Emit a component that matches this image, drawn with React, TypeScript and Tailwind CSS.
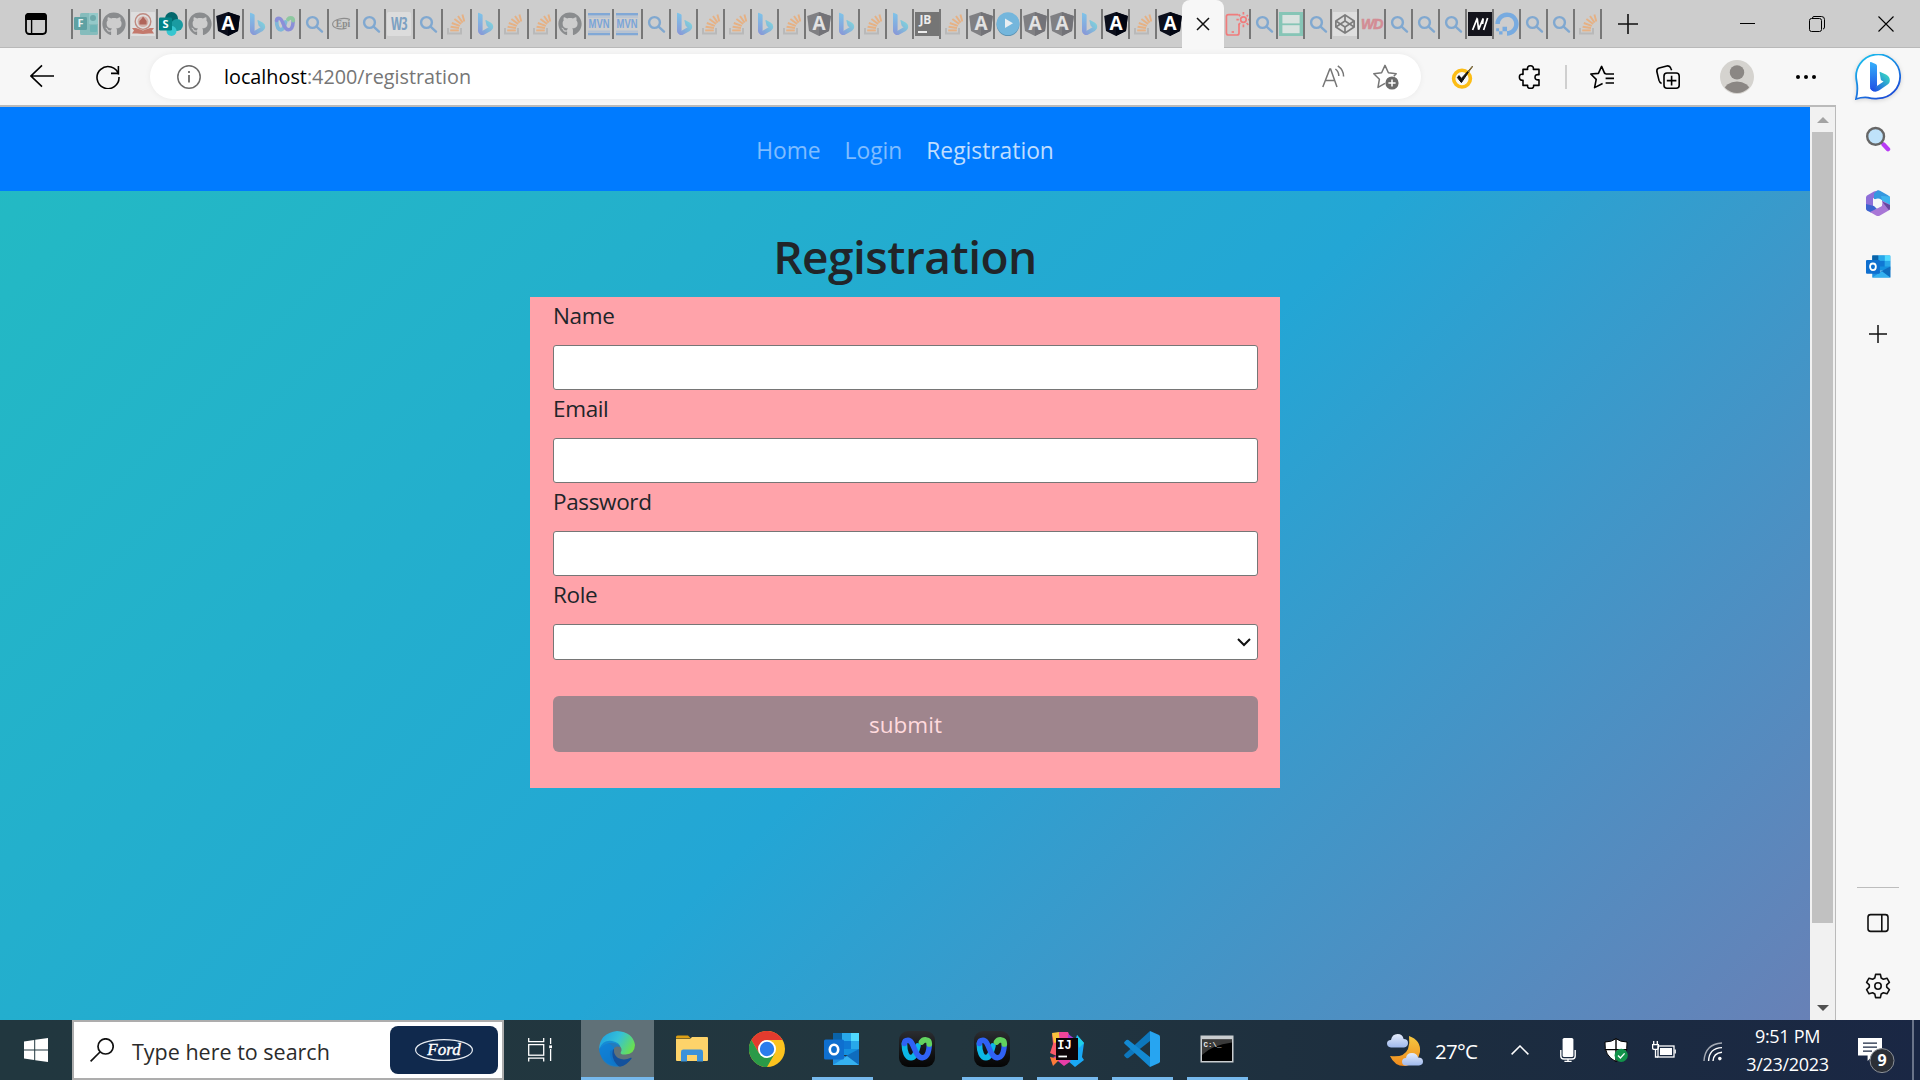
import React from "react";
import { FaGithub, FaCodepen, FaDigitalOcean } from "react-icons/fa";

/* ---------- favicons ---------- */

function Github() {
  return <FaGithub className="size-6 shrink-0 text-[#8a8c8e]" />;
}

function Search() {
  return (
    <svg viewBox="0 0 24 24" className="size-6 shrink-0" fill="none" stroke="#80a8d0" strokeWidth="2.4">
      <circle cx="10.5" cy="10.5" r="5.4" />
      <path d="M14.6 14.6 20 19.6" strokeLinecap="round" />
    </svg>
  );
}

function StackOverflow() {
  return (
    <svg viewBox="0 0 24 24" className="size-6 shrink-0" fill="none">
      <path d="M4 16v5.4h13V16" stroke="#b9b9b9" strokeWidth="2" />
      <g stroke="#e6b184" strokeWidth="1.9">
        <path d="M6.2 18.4h8.6" />
        <path d="M6.6 14.8l8.4 1.2" />
        <path d="M7.8 11l8 2.8" />
        <path d="M10.4 7l6.8 5" />
        <path d="M14 4l4.6 6.6" />
        <path d="M18.4 2.4l1.9 7" />
      </g>
    </svg>
  );
}

function Bing({ id }: { id: string }) {
  return (
    <svg viewBox="0 0 24 24" className="size-6 shrink-0">
      <defs>
        <linearGradient id={id + "s"} x1="0" y1="0" x2="0" y2="1">
          <stop offset="0" stopColor="#7fc4e8" />
          <stop offset="1" stopColor="#8898d8" />
        </linearGradient>
        <linearGradient id={id + "w"} x1="0" y1="1" x2="1" y2="0">
          <stop offset="0.1" stopColor="#8898d8" />
          <stop offset="0.9" stopColor="#7fd3dc" />
        </linearGradient>
      </defs>
      <path d="M5 1.2Q5 .6 5.6 .8L9 2.3Q9.6 2.6 9.6 3.4V18.6L8 22.4Q5 21.8 5 18.6Z" fill={"url(#" + id + "s)"} />
      <path d="M12.4 8.6Q12.2 8 13 8.1L17.6 10.4Q20.4 12 20.2 15.2 20 17.6 17.8 19L11.4 22.6Q9 23.8 7 22.2 6 21.2 5.6 19.6 7.4 20.8 9.6 18.8L15.6 15.2 14.4 14.4Q13.8 14 13.5 13.2Z" fill={"url(#" + id + "w)"} />
    </svg>
  );
}

function Angular({ dark = false }: { dark?: boolean }) {
  return (
    <svg viewBox="0 0 24 24" className="size-6 shrink-0">
      <path d="M12 0 23.8 4 22 19 12 24 2 19 .2 4Z" fill={dark ? "#0c0f1c" : "#808083"} />
      <path d="M12 0 23.8 4 22 19 12 24Z" fill={dark ? "#010512" : "#737378"} />
      <text x="12" y="18" textAnchor="middle" fontFamily="Open Sans, sans-serif" fontWeight="700" fontSize="19" fill={dark ? "#fff" : "#e2e2e2"}>A</text>
    </svg>
  );
}

function Forms() {
  return (
    <svg viewBox="0 0 24 24" className="size-6 shrink-0">
      <rect x="6" y="1" width="18" height="22" rx="1.5" fill="#86bcbc" />
      <rect x="15" y="1" width="9" height="11" fill="#94c9c9" />
      <circle cx="19" cy="6" r="3" fill="#6fa9aa" />
      <rect x="16" y="13" width="7" height="7" rx="1" fill="#6fb5b6" />
      <rect x="0" y="5" width="13" height="13" rx="1.2" fill="#5fa1a3" />
      <text x="6.5" y="15.4" textAnchor="middle" fontFamily="Open Sans, sans-serif" fontWeight="700" fontSize="11" fill="#e6f0f0">F</text>
    </svg>
  );
}

function Seal() {
  return (
    <svg viewBox="0 0 24 24" className="size-6 shrink-0">
      <rect width="24" height="24" fill="#dedede" />
      <circle cx="12" cy="9.6" r="7.8" fill="none" stroke="#bf8a80" strokeWidth="1.4" />
      <circle cx="12" cy="9.6" r="5.4" fill="#d3b0a9" />
      <path d="M8.4 12.600V9l2-2 1.600-2.600 1.800 2.400L15.600 9v3.600z" fill="#b0645a" />
      <path d="M1 16h4l7 2.4 7-2.4h4l-2 2.6 2 2.8h-5L12 22l-6-.6H1l2-2.8z" fill="#c4796c" />
    </svg>
  );
}

function SharePoint() {
  return (
    <svg viewBox="0 0 24 24" className="size-6 shrink-0">
      <circle cx="12.5" cy="6.5" r="6.5" fill="#03676c" />
      <circle cx="18" cy="13" r="6" fill="#1a9ba1" />
      <circle cx="12.5" cy="19" r="5" fill="#37c6d0" />
      <rect x="0" y="5.5" width="13" height="13" rx="1.2" fill="#038387" />
      <text x="6.5" y="16" textAnchor="middle" fontFamily="Open Sans, sans-serif" fontWeight="700" fontSize="11" fill="#fff">S</text>
    </svg>
  );
}

function WebexMark({ faded = false }: { faded?: boolean }) {
  return (
    <svg viewBox="0 0 24 24" className="size-full" fill="none" strokeLinecap="round">
      <path d="M3.600 8.600C3.600 14 5.200 17.800 8 17.800c2.800 0 3.600-4.400 4.600-7.800" stroke={faded ? "#7fb8d8" : "#0cb7e6"} strokeWidth="3.800" />
      <path d="M3.600 8.400C3.600 6.800 4.600 6.200 6 6.200c4.200 0 4.200 11.600 9.600 11.600 3 0 4.400-4 4.600-8.800" stroke={faded ? "#8b8fd8" : "#2f62f5"} strokeWidth="3.600" />
      <path d="M15 7.400C15.800 6.200 17 5.800 18.200 6c1.400.2 2 1.200 2 2.600" stroke={faded ? "#8dc8a0" : "#62d35f"} strokeWidth="3.800" />
    </svg>
  );
}

function Epi() {
  return (
    <svg viewBox="0 0 24 24" className="size-6 shrink-0">
      <path d="M20 7.500C14 5 3 7 2.600 12c0 5 10 6 14 4" fill="none" stroke="#8c8c8c" strokeWidth="1.100" />
      <text x="13" y="15.200" textAnchor="middle" fontFamily="Liberation Serif, serif" fontWeight="700" fontSize="9.500" fill="#8a8a8a">Epi</text>
    </svg>
  );
}

function W3() {
  return (
    <svg viewBox="0 0 24 24" className="size-6 shrink-0">
      <rect width="24" height="24" rx="1.500" fill="#dcdcdc" />
      <text x="12" y="18" textAnchor="middle" fontFamily="Open Sans Condensed, Open Sans, sans-serif" fontSize="14" fontWeight="600" letterSpacing="-0.800" fill="#7da1c2" transform="translate(0 -5.400) scale(1 1.300)">W3</text>
    </svg>
  );
}

function Mvn() {
  return (
    <svg viewBox="0 0 24 24" className="size-6 shrink-0">
      <path d="M1 2.200h22M1 22h22" stroke="#81a8d6" strokeWidth="2.400" />
      <path d="M1 5h22M1 19.200h22" stroke="#a8bcd6" strokeWidth="1" />
      <text x="12" y="12.600" textAnchor="middle" fontFamily="Liberation Sans, sans-serif" fontWeight="700" fontSize="9.400" fill="#7ba4d8" transform="scale(1 1.300)">MVN</text>
    </svg>
  );
}

function JetBrains() {
  return (
    <svg viewBox="0 0 24 24" className="size-6 shrink-0">
      <rect width="24" height="24" fill="#757575" />
      <text x="10.400" y="12" textAnchor="middle" fontFamily="Open Sans, sans-serif" fontWeight="700" fontSize="12" fill="#ececec">JB</text>
      <rect x="3" y="19" width="9" height="2" fill="#ececec" />
    </svg>
  );
}

function Play() {
  return (
    <svg viewBox="0 0 24 24" className="size-6 shrink-0">
      <circle cx="12" cy="12.600" r="11.400" fill="#5c93b3" />
      <circle cx="12" cy="11.600" r="11.400" fill="#74b6dc" />
      <path d="M9 6.500v9.600l8-4.800z" fill="#e8eef2" />
    </svg>
  );
}

function PhoneSun() {
  return (
    <svg viewBox="0 0 24 24" className="size-6 shrink-0" fill="none" stroke="#f07c7c" strokeWidth="1.700">
      <path d="M13 2.600H3.400Q1.400 2.600 1.400 4.600V21q0 2 2 2H12q2 0 2-2v-9" />
      <circle cx="18.400" cy="7.600" r="2.800" />
      <path d="M18.400 0v2.400M18.400 12.600v2.600M11.400 7.600h2.400M23 7.600h1.400M13.400 2.400l1.800 1.800M23 3l-1.400 1.400M13.600 12.600l1.600-1.600M21.600 11l1.800 1.800" />
      <path d="M6.600 20h2.400" />
    </svg>
  );
}

function GreenPanel() {
  return (
    <svg viewBox="0 0 24 24" className="size-6 shrink-0">
      <rect width="24" height="24" fill="#86c5b6" />
      <rect x="3.400" y="3" width="17.200" height="8.400" fill="#d9e2df" />
      <rect x="3.400" y="13.200" width="17.200" height="8" fill="#d9e2df" />
    </svg>
  );
}

function Codepen() {
  return (
    <div className="flex size-6 shrink-0 items-center justify-center bg-[#dedede]">
      <FaCodepen className="size-5 text-[#7c7c7c]" />
    </div>
  );
}

function Wd() {
  return (
    <svg viewBox="0 0 24 24" className="size-6 shrink-0">
      <text x="11.800" y="17.400" textAnchor="middle" fontFamily="Liberation Sans, sans-serif" fontStyle="italic" fontWeight="700" fontSize="14" letterSpacing="-0.800" stroke="#d38c94" strokeWidth=".6" fill="#d38c94">WD</text>
    </svg>
  );
}

function Medium() {
  return (
    <svg viewBox="0 0 24 24" className="size-6 shrink-0">
      <rect width="24" height="24" fill="#14141c" />
      <path d="M4.600 18 9.200 6.400 10.600 17.600 15.200 6.400 M15.200 6.400 14.600 12M19.600 6 15.600 18M9.200 6.400 8.400 6.400" stroke="#fff" strokeWidth="1.700" fill="none" strokeLinejoin="bevel" />
    </svg>
  );
}

function Digital() {
  return <FaDigitalOcean className="size-6 shrink-0 text-[#78abe0]" />;
}

type Kind =
  | "forms" | "github" | "seal" | "sharepoint" | "angular" | "angularGray" | "bing" | "webex" | "search"
  | "epi" | "w3" | "so" | "mvn" | "jb" | "play" | "phone" | "green" | "codepen" | "wd" | "m" | "do";

function Favicon({ kind, id }: { kind: Kind; id: string }) {
  switch (kind) {
    case "forms": return <Forms />;
    case "github": return <Github />;
    case "seal": return <Seal />;
    case "sharepoint": return <SharePoint />;
    case "angular": return <Angular dark />;
    case "angularGray": return <Angular />;
    case "bing": return <Bing id={id} />;
    case "webex": return <div className="size-6"><WebexMark faded /></div>;
    case "search": return <Search />;
    case "epi": return <Epi />;
    case "w3": return <W3 />;
    case "so": return <StackOverflow />;
    case "mvn": return <Mvn />;
    case "jb": return <JetBrains />;
    case "play": return <Play />;
    case "phone": return <PhoneSun />;
    case "green": return <GreenPanel />;
    case "codepen": return <Codepen />;
    case "wd": return <Wd />;
    case "m": return <Medium />;
    case "do": return <Digital />;
  }
}

const wideTabs: Kind[] = [
  "forms", "github", "seal", "sharepoint", "github", "angular", "bing", "webex", "search", "epi", "search",
  "w3", "search", "so", "bing", "so", "so", "github", "mvn", "mvn", "search",
];
const midTabs: Kind[] = [
  "bing", "so", "so", "bing", "so", "angularGray", "bing", "so", "bing", "jb", "so", "angularGray", "play",
  "angularGray", "angularGray", "bing", "angular", "so", "angular",
];
const lastTabs: Kind[] = [
  "phone", "search", "green", "search", "codepen", "wd", "search", "search", "search", "m", "do", "search",
  "search", "so",
];

function TabStrip() {
  return (
    <div className="flex h-12 items-center bg-[#cdcdcd] shadow-[inset_0_-1px_0_#b9b9b9]">
      <div className="flex w-[70.5px] justify-center pl-[1.5px]">
        <svg viewBox="0 0 24 24" className="size-6" fill="none" stroke="#000" strokeWidth="1.800">
          <rect x="2" y="2" width="20" height="20" rx="3.200" />
          <path d="M2 4.500Q2 2 4.500 2h15Q22 2 22 4.500V7H2z" fill="#000" />
          <path d="M7.600 7v15" strokeWidth="1.400" />
        </svg>
      </div>
      <div className="flex h-[30px]">
        {wideTabs.map((k, i) => (
          <div key={i} className="flex w-[28.5px] items-center justify-center border-l-2 border-[#777]">
            <Favicon kind={k} id={"a" + i} />
          </div>
        ))}
        {midTabs.map((k, i) => (
          <div key={i} className="flex w-[27px] items-center justify-center border-l-2 border-[#777]">
            <Favicon kind={k} id={"b" + i} />
          </div>
        ))}
      </div>
      <div className="z-10 flex h-12 w-[42px] items-center justify-center rounded-t-lg bg-[#f7f7f7]">
        <svg viewBox="0 0 14 14" className="size-[14px]" stroke="#111" strokeWidth="1.500">
          <path d="M1 1l12 12M13 1 1 13" />
        </svg>
      </div>
      <div className="flex h-[30px]">
        {lastTabs.map((k, i) => (
          <div key={i} className="flex w-[27px] items-center justify-center border-r-2 border-[#777]">
            <Favicon kind={k} id={"c" + i} />
          </div>
        ))}
      </div>
      <div className="flex w-[51px] justify-center">
        <svg viewBox="0 0 22 22" className="size-[22px]" stroke="#111" strokeWidth="1.600">
          <path d="M11 1v20M1 11h20" />
        </svg>
      </div>
      <div className="ml-auto flex">
        <div className="flex w-[69px] justify-center">
          <svg viewBox="0 0 16 16" className="size-4" stroke="#000"><path d="M0 7.500h15" /></svg>
        </div>
        <div className="flex w-[69px] justify-center">
          <svg viewBox="0 0 16 16" className="size-4" fill="none" stroke="#000">
            <rect x=".5" y="2.500" width="12" height="13" rx="2" />
            <path d="M3.500 2Q3.500.5 5 .5h7.500q3 0 3 3V11q0 2-1.500 2" />
          </svg>
        </div>
        <div className="flex w-[69px] justify-center">
          <svg viewBox="0 0 16 16" className="size-4" stroke="#000" strokeWidth="1.100"><path d="M.5.5l15 15M15.500.5l-15 15" /></svg>
        </div>
      </div>
    </div>
  );
}

function BingChat() {
  return (
    <svg viewBox="0 0 46 46" className="mr-0.5 size-[46px] drop-shadow-sm">
      <defs>
        <linearGradient id="bubble" x1="0" y1="0" x2="0.6" y2="1">
          <stop offset="0" stopColor="#19c8f0" />
          <stop offset="1" stopColor="#1b50d8" />
        </linearGradient>
        <linearGradient id="bStem" x1="0" y1="0" x2="0" y2="1">
          <stop offset="0" stopColor="#36b0fb" />
          <stop offset="1" stopColor="#1f4fe4" />
        </linearGradient>
        <linearGradient id="bTail" x1="0" y1="1" x2="1" y2="0">
          <stop offset="0.1" stopColor="#1d4fe6" />
          <stop offset="0.9" stopColor="#37d8c4" />
        </linearGradient>
      </defs>
      <path d="M1 45Q3.400 36 1.600 27A22 22 0 1 1 23 44.400Q18 45 13 43.600 7 43 1 45Z" fill="#fff" stroke="url(#bubble)" strokeWidth="1.800" />
      <path d="M15 8.600q0-1 1-.6l4.600 2q1.400.6 1.400 2V32l-3 5.400q-4-.8-4-4.600z" fill="url(#bStem)" />
      <path d="M24.600 18.400q-.2-.8.8-.5l5.600 2.500q4 2 3.800 6 0 3-3.200 4.800L24 36.600q-3.600 2-6.400.2-1.800-1.200-2.400-3 3 1 6-1.400l7.400-4.800-1.600-.8q-1-.6-1.200-1.400z" fill="url(#bTail)" />
    </svg>
  );
}

function Toolbar() {
  return (
    <div className="flex h-[57px] items-center bg-[#f7f7f7]">
      <div className="flex w-[84px] justify-center pb-0.5">
        <svg viewBox="0 0 24 24" className="size-6" fill="none" stroke="#000" strokeWidth="1.600">
          <path d="M24 12H1M12 1.400 1 12l11 10.600" />
        </svg>
      </div>
      <div className="flex w-12 justify-center">
        <svg viewBox="0 0 24 24" className="size-6" fill="none" stroke="#000" strokeWidth="1.600">
          <path d="M22.600 9.600A11 11 0 1 0 23 12M22.400 1v7.400H15" />
        </svg>
      </div>
      <div className="ml-[18px] flex h-[45px] w-[1271px] items-center rounded-full bg-white pr-[22px] pl-[27px] shadow-[0_0_6px_rgba(0,0,0,0.06)]">
        <svg viewBox="0 0 24 24" className="size-6" fill="none" stroke="#6b6b6b" strokeWidth="1.500">
          <circle cx="12" cy="12" r="11.200" />
          <path d="M12 10v7.600M12 6v2" strokeWidth="1.800" />
        </svg>
        <div className="ml-[23px] flex-1 text-[19.800px] leading-none text-[#767676]">
          <span className="text-black">localhost</span>:4200/registration
        </div>
        <svg viewBox="0 0 24 24" className="size-6" fill="none" stroke="#767676" strokeWidth="1.500">
          <path d="M.8 22 7.800 4h.8L15 22M3.400 15.600h9.600" />
          <path d="M13.400 4q3.400 2.400 3.400 7M15.800 .8q5.800 4 5.800 10.600" />
        </svg>
        <svg viewBox="0 0 26 26" className="ml-[27px] size-[26px]" fill="none" stroke="#767676" strokeWidth="1.500">
          <path d="M12 19.400 5 23.400l1.400-8.200L.8 9.800l7.800-1L12 1.400l3.400 7.400 7.800 1-2.400 2.400" strokeLinejoin="round" />
          <circle cx="19" cy="19" r="6.600" fill="#6b6b6b" stroke="none" />
          <path d="M19 15.400v7.200M15.400 19h7.200" stroke="#fff" />
        </svg>
      </div>
      <div className="flex w-[84px] justify-center">
        <svg viewBox="0 0 24 24" className="size-6" fill="none">
          <circle cx="11" cy="13.600" r="8.400" stroke="#fcbd16" strokeWidth="3.600" />
          <path d="M6.400 12.600l4 5L21.400 1.400 10.400 13.400 8 10.600z" fill="#111" stroke="#111" strokeWidth="1" />
          <path d="M17 7 21.600 1.400" stroke="#907a40" strokeWidth="1.200" />
        </svg>
      </div>
      <div className="flex w-[49px] justify-center">
        <svg viewBox="0 0 24 24" className="size-6" fill="none" stroke="#000" strokeWidth="1.600" strokeLinejoin="round">
          <path d="M5 4.400h4.600Q9 .8 12.400.8T15.400 4.400H21v5.400q-4-.8-4 2.400t4 2.600v5.600h-5.400q.4 3-3 3t-3-3H5v-5.200q-3.600.4-3.600-3.200T5 9.400z" />
        </svg>
      </div>
      <div className="ml-[11px] h-6 w-0.5 bg-[#cfcfcf]" />
      <div className="flex w-[70px] justify-center">
        <svg viewBox="0 0 24 24" className="size-6" fill="none" stroke="#000" strokeWidth="1.600" strokeLinejoin="round">
          <path d="M16 8.600 14.600 8.400 11.600 1.400 8.400 8.400.8 9l5.400 5.400L4.600 22.600l6.600-3.400 1.400-.6M15.600 9H24M15.600 13.400H24M15.600 18H24" />
        </svg>
      </div>
      <div className="flex w-[62px] justify-center">
        <svg viewBox="0 0 24 24" className="size-6" fill="none" stroke="#000" strokeWidth="1.600">
          <path d="M5.600 18.400Q3.600 17.600 3 15.400L.9 6.800Q.4 3.800 3.200 3L10.800 1q3-.6 4 2.200l.8 2" />
          <rect x="8" y="8" width="15.200" height="15.200" rx="3" />
          <path d="M15.600 10.800v9.600M10.800 15.600h9.600" />
        </svg>
      </div>
      <div className="flex w-[76px] justify-center">
        <svg viewBox="0 0 34 34" className="size-[34px]">
          <defs><clipPath id="av"><circle cx="17" cy="17" r="16" /></clipPath></defs>
          <circle cx="17" cy="17" r="17" fill="#d5d3cf" />
          <circle cx="17" cy="12.400" r="7.200" fill="#8b8784" />
          <ellipse cx="17" cy="31" rx="13" ry="9.400" fill="#8b8784" clipPath="url(#av)" />
        </svg>
      </div>
      <div className="flex w-[62px] justify-center gap-1">
        <span className="size-1 rounded-full bg-black" />
        <span className="size-1 rounded-full bg-black" />
        <span className="size-1 rounded-full bg-black" />
      </div>
      <div className="flex w-[83px] justify-center"><BingChat /></div>
    </div>
  );
}

/* ---------- page ---------- */

function Label({ text }: { text: string }) {
  return <span className="block h-9 text-[22.500px] leading-[38px] tracking-[-0.350px] text-[#212529]">{text}</span>;
}

function Field({ label }: { label: string }) {
  return (
    <label className="block">
      <Label text={label} />
      <input className="mt-3 block h-[45px] w-full rounded-[3px] border border-[#767676] bg-white outline-none" />
    </label>
  );
}

function Page() {
  return (
    <div className="flex w-[1810px] flex-col overflow-hidden">
      <nav className="flex h-[84px] items-center justify-center bg-[#007bff] pt-[5px] text-[22.800px] text-white/50">
        <a className="px-3">Home</a>
        <a className="px-3">Login</a>
        <a className="px-3 text-white/75">Registration</a>
      </nav>
      <main className="flex flex-1 flex-col items-center bg-[linear-gradient(135deg,#23d5ab_-75%,#23a6d5_53%,#e73c7e_187%)]">
        <h1 className="mt-9 mb-3 h-[58px] text-[46px] leading-[59px] font-semibold tracking-[-0.5px] text-[#212529]">Registration</h1>
        <form className="flex h-[491px] w-[750px] flex-col bg-[#ffa3aa] pr-[22px] pl-[23px]">
          <Field label="Name" />
          <Field label="Email" />
          <Field label="Password" />
          <Label text="Role" />
          <div className="mt-3 flex h-9 items-center justify-end rounded-[3px] border border-[#767676] bg-white pr-1.5">
            <svg viewBox="0 0 14 10" className="h-2.5 w-3.5" fill="none" stroke="#111" strokeWidth="2">
              <path d="M1 2l6 6 6-6" />
            </svg>
          </div>
          <button type="button" className="mt-9 h-14 rounded-md bg-[#9f858d] pt-0.5 text-[22.500px] text-[#ffdadd]">submit</button>
        </form>
      </main>
    </div>
  );
}

function Scrollbar() {
  return (
    <div className="flex w-[25px] flex-col items-center bg-[#f1f1f1]">
      <div className="flex h-[25px] items-center">
        <svg viewBox="0 0 12 6" className="h-1.5 w-3"><path d="M0 6 6 0l6 6z" fill="#a3a3a3" /></svg>
      </div>
      <div className="h-[791px] w-[21px] bg-[#c1c1c1]" />
      <div className="mt-auto flex h-6 items-center">
        <svg viewBox="0 0 12 6" className="h-1.5 w-3"><path d="M0 0l6 6 6-6z" fill="#505050" /></svg>
      </div>
    </div>
  );
}

function OutlookIcon() {
  return (
    <svg viewBox="0 0 36 36" className="size-full">
      <rect x="9" y="2" width="26" height="22" rx="1.500" fill="#1490df" />
      <rect x="9" y="2" width="9" height="8" fill="#0a63a8" />
      <rect x="18" y="2" width="9" height="8" fill="#28a8ea" />
      <rect x="27" y="2" width="8" height="8" fill="#50d9ff" />
      <rect x="18" y="10" width="9" height="8" fill="#0f78d4" />
      <rect x="27" y="10" width="8" height="8" fill="#28a8ea" />
      <path d="M9 18l13 8 13-8v16H9z" fill="#1f8fe0" />
      <path d="M35 18v16L20 26z" fill="#0f6cbd" />
      <path d="M9 34l14-9 12 9z" fill="#35b1f0" />
      <rect x="0" y="8.500" width="20" height="20" rx="1.600" fill="#0f6fcf" />
      <ellipse cx="10" cy="18.500" rx="4.200" ry="4.800" fill="none" stroke="#fff" strokeWidth="2.600" />
    </svg>
  );
}

function Sidebar() {
  return (
    <aside className="flex w-[84px] flex-col items-center bg-[#f7f7f7]">
      <div className="flex h-[66px] items-center pt-px">
        <svg viewBox="0 0 26 26" className="size-[26px]">
          <path d="M16.600 16.600l2.400 2.200" stroke="#666" strokeWidth="2.600" />
          <path d="M18.600 18.600l4.400 4.600" stroke="#b83cf5" strokeWidth="4.400" strokeLinecap="round" />
          <circle cx="10.600" cy="10.400" r="8.400" fill="#bfe2fa" stroke="#666" strokeWidth="2.400" />
        </svg>
      </div>
      <div className="flex h-16 items-center">
        <svg viewBox="0 0 26 26" className="size-[26px]">
          <path d="M13 .4 9 1.400 2 5.400Q1 6.200 1 7.600v11.600l7 2V8.400L17 3z" fill="#8f6fd8" />
          <path d="M1 14v4.600Q1 20 2.200 20.800L6 22.400l6-3.400-3-3z" fill="#3d63cf" />
          <path d="M9 3.400 12.400.6Q13.600 0 15 .8l8 4.400Q25 6.400 25 8v6.400L16 9.600 9 9z" fill="#3598e0" />
          <path d="M25 8v10.400q0 1.400-1.400 2.200L15 25.400q-2 1-4 0L5 22l12-6V9.600l8 4z" fill="#a877d6" />
          <path d="M25 6.600v8.200l-8-4.400L16 6z" fill="#3fb4ee" />
          <path d="M17 11.500l8 3.400v3q0 1.600-1 2.400z" fill="#66479c" />
          <circle cx="13" cy="13" r="4.400" fill="#f7f7f7" />
        </svg>
      </div>
      <div className="flex h-[62px] items-center"><div className="size-[25px]"><OutlookIcon /></div></div>
      <div className="flex h-[73px] items-center">
        <svg viewBox="0 0 18 18" className="size-[18px]" stroke="#111" strokeWidth="1.500"><path d="M9 0v18M0 9h18" /></svg>
      </div>
      <div className="mt-auto h-px w-[42px] bg-[#bdbdbd]" />
      <div className="mt-[5px] flex h-[58px] items-center pt-px">
        <svg viewBox="0 0 22 20" className="h-5 w-[22px]" fill="none" stroke="#111" strokeWidth="1.600">
          <rect x="1" y="1.600" width="20" height="16.800" rx="2.600" />
          <path d="M14.800 1.600v16.800" />
        </svg>
      </div>
      <div className="flex h-[69px] items-center">
        <svg viewBox="0 0 26 26" className="size-[26px]" fill="none" stroke="#111" strokeWidth="1.600" strokeLinejoin="round">
          <path d="M10.600 1.400h4.800l.8 3.600 2.200 1.300 3.600-1.100 2.400 4.200-2.700 2.500v2.200l2.700 2.500-2.400 4.200-3.600-1.100-2.200 1.300-.8 3.600h-4.800L9.800 21 7.600 19.700 4 20.800 1.600 16.600l2.700-2.500v-2.200L1.600 9.400 4 5.200l3.600 1.100L9.800 5z" />
          <circle cx="13" cy="13" r="3.200" />
        </svg>
      </div>
    </aside>
  );
}

/* ---------- taskbar ---------- */

function EdgeIcon() {
  return (
    <svg viewBox="0 0 36 36" className="size-9">
      <defs>
        <linearGradient id="eg" x1="0" y1="0.2" x2="1" y2="0.6">
          <stop offset="0" stopColor="#1e9fe0" />
          <stop offset="0.5" stopColor="#35c1d8" />
          <stop offset="1" stopColor="#6be04e" />
        </linearGradient>
        <linearGradient id="eb" x1="0" y1="0" x2="0.8" y2="1">
          <stop offset="0" stopColor="#1a8fe0" />
          <stop offset="1" stopColor="#0c59a4" />
        </linearGradient>
      </defs>
      <path d="M0 18a18 18 0 0 0 32 10Q25 31.500 19 28 12.500 24 15 17 9 8 0 18z" fill="url(#eb)" />
      <path d="M11 20q-1 12 10 15.700Q28 34 32.600 27.400q.4-1-.8-.6Q25 30 19 27q-4.600-3-4-9z" fill="#14519c" />
      <path d="M0 18Q1 2 18 0q16 1 18 14-.4 9-9.400 9.600-6 .2-4.800-2.400Q24 18 20 14 10 8 0 18z" fill="url(#eg)" />
      <path d="M0 18Q4 8.600 13 10q8 1.600 8 6-5-2-7 3-2.600 9 6 16.800Q3 37 0 18z" fill="#0f7fd4" opacity=".75" />
    </svg>
  );
}

function ExplorerIcon() {
  return (
    <svg viewBox="0 0 34 30" className="h-[30px] w-[34px]">
      <path d="M1 3q0-1.600 1.600-1.600H13l3 3H1z" fill="#dd9f13" />
      <path d="M1 5h14l2-2h15q1 0 1 1v22q0 1-1 1H2q-1 0-1-1z" fill="#fdd36a" />
      <path d="M6 27.600V18q0-2.400 2.400-2.400h17.200Q28 15.600 28 18v9.600h-6V21H12v6.600z" fill="#3b92d9" />
    </svg>
  );
}

function ChromeIcon() {
  return (
    <svg viewBox="0 0 36 36" className="size-9">
      <circle cx="18" cy="18" r="18" fill="#fcc31e" />
      <path d="M18 9h15.600A18 18 0 0 0 2.400 9L10.200 22.500z" fill="#e33b2e" />
      <path d="M2.400 9a18 18 0 0 0 15.600 27l7.800-13.500H10.200z" fill="#2a9a48" />
      <circle cx="18" cy="18" r="9" fill="#fff" />
      <circle cx="18" cy="18" r="7.200" fill="#2b7cec" />
    </svg>
  );
}

function WebexIcon() {
  return (
    <div className="size-9 rounded-[9px] bg-gradient-to-b from-[#2b2d31] to-[#050505]"><WebexMark /></div>
  );
}

function IntelliJIcon() {
  return (
    <svg viewBox="0 0 36 36" className="size-9">
      <path d="M3 3l8 5-1 18-9-4 3-9z" fill="#fb5a6a" />
      <path d="M3 2l7-1 2 9-7 2z" fill="#f9c23c" />
      <path d="M10 1l9 0 4 9-12 4z" fill="#f0459a" />
      <path d="M19 3l7 5 3 6-10-2z" fill="#a83ad0" />
      <path d="M28 4l7 8-2 14 2 3-9 7-7-6z" fill="#19a8f5" />
      <path d="M28 4l7 8-5 5z" fill="#20d0e8" />
      <path d="M4 26l8-2 10 6-7 5z" fill="#e83ea8" />
      <path d="M4 35L1 26l10 2z" fill="#fd7a3a" />
      <rect x="7" y="7" width="22" height="22" fill="#0c0408" />
      <text x="15.400" y="18" textAnchor="middle" fontFamily="Liberation Mono, monospace" fontWeight="700" fontSize="12" fill="#fff">IJ</text>
      <rect x="9.400" y="24.600" width="8.600" height="1.800" fill="#fff" />
    </svg>
  );
}

function CodeIcon() {
  return (
    <svg viewBox="0 0 36 36" className="size-9">
      <path d="M26 0v10L4.400 27q-1 .6-2 0L.6 25.200q-1-1 0-2z" fill="#0d77bd" />
      <path d="M26 36V26L4.400 9q-1-.6-2 0L.6 10.800q-1 1 0 2z" fill="#1389d2" />
      <path d="M26 0l9 4q1 .6 1 1.800v24.400q0 1.200-1 1.800l-9 4z" fill="#27a5f1" />
    </svg>
  );
}

function TerminalIcon() {
  return (
    <svg viewBox="0 0 34 28" className="h-7 w-[34px]">
      <rect x=".5" y=".5" width="33" height="27" fill="#c9cdd0" />
      <rect x="2" y="4.500" width="30" height="21.500" fill="#000" />
      <path d="M2 4.500h30v3Q12 10 2 20z" fill="#3a3a3a" />
      <text x="3.600" y="12.200" fontFamily="Liberation Mono, monospace" fontWeight="700" fontSize="7.400" fill="#e8e8e8">C:\_</text>
    </svg>
  );
}

const apps: { icon: React.ReactNode; open: boolean; active?: boolean }[] = [
  { icon: <EdgeIcon />, open: true, active: true },
  { icon: <ExplorerIcon />, open: false },
  { icon: <ChromeIcon />, open: false },
  { icon: <div className="size-9"><OutlookIcon /></div>, open: true },
  { icon: <WebexIcon />, open: false },
  { icon: <WebexIcon />, open: true },
  { icon: <IntelliJIcon />, open: true },
  { icon: <CodeIcon />, open: true },
  { icon: <TerminalIcon />, open: true },
];

function Taskbar() {
  return (
    <div className="flex h-[60px] items-center bg-[linear-gradient(90deg,#21373f_0%,#22363f_50%,#1c2d3f_75%,#1a2744_100%)] text-white">
      <div className="flex w-[72px] justify-center">
        <svg viewBox="0 0 24 24" className="size-6" fill="#fff">
          <path d="M0 3.400 10.200 2v9.500H0zM11.200 1.800 24 0v11.500H11.200zM0 12.500h10.200V22L0 20.600zM11.200 12.500H24V24l-12.800-1.800z" />
        </svg>
      </div>
      <div className="flex h-[60px] w-[432px] items-center border-2 border-[#adadad] bg-white pr-1 pl-4">
        <svg viewBox="0 0 24 24" className="size-6" fill="none" stroke="#111" strokeWidth="1.700">
          <circle cx="15.600" cy="8.400" r="7.600" />
          <path d="M10 14 .6 23.400" />
        </svg>
        <span className="ml-[18px] pt-1 text-[21.500px] text-[#2b2b2b]">Type here to search</span>
        <div className="ml-auto flex h-12 w-[108px] items-center justify-center rounded-lg bg-[#10294d]">
          <svg viewBox="0 0 58 22" className="h-[22px] w-[58px]">
            <ellipse cx="29" cy="11" rx="28.400" ry="10.400" fill="none" stroke="#e8edf3" strokeWidth="1.200" />
            <text x="29" y="16" textAnchor="middle" fontFamily="Liberation Serif, serif" fontStyle="italic" fontSize="17" stroke="#fff" strokeWidth=".4" fill="#fff">Ford</text>
          </svg>
        </div>
      </div>
      <div className="flex w-[76px] pl-6">
        <svg viewBox="0 0 24 24" className="size-6" fill="none" stroke="#fff" strokeWidth="1.300">
          <rect x=".7" y="6.600" width="15" height="10.600" />
          <path d="M.7 0v3.600h15V0M.7 23.400v-3.200h15v3.200M22.600 0v6M22.600 11v12" />
          <rect x="21.200" y="7.400" width="2.800" height="2.800" fill="#fff" stroke="none" />
        </svg>
      </div>
      {apps.map((a, i) => (
        <div key={i} className="flex h-[60px] w-[75px] flex-col items-center px-px">
          <div className={a.active ? "flex w-full flex-1 items-center justify-center bg-[#607178]" : "flex w-full flex-1 items-center justify-center"}>
            <div className="pt-px pr-0.5">{a.icon}</div>
          </div>
          <div className={a.active ? "h-[3px] w-full bg-[#76b9ed]" : a.open ? "h-[3px] w-[61px] bg-[#76b9ed]" : "h-[3px]"} />
        </div>
      ))}
      <svg viewBox="0 0 36 34" className="ml-[132px] h-[34px] w-9">
        <defs>
          <linearGradient id="moon" x1="0" y1="0" x2="0" y2="1">
            <stop offset="0" stopColor="#f5c842" />
            <stop offset="1" stopColor="#f08a1c" />
          </linearGradient>
          <linearGradient id="cl" x1="0" y1="0" x2="0" y2="1">
            <stop offset="0" stopColor="#e4ecfb" />
            <stop offset="1" stopColor="#9fb9ec" />
          </linearGradient>
        </defs>
        <path d="M22 3q12 4 11 16-2 12-14 14Q8 34 3 23q14 2 18-7 2-6 1-13z" fill="url(#moon)" />
        <path d="M4 14.400Q0 14 0 10.600 0 7 4 7q1-6 6.600-6 5 0 6 5Q21 6 21 10q0 4-4 4.400z" fill="url(#cl)" />
        <path d="M19 32.400q-4 0-4-3.600t4-3.800q.6-5 6-5 5 0 6 4.600 5 0 5 4 0 3.800-4 3.800z" fill="url(#cl)" />
      </svg>
      <span className="ml-3 w-[55px] pt-[3px] text-[20.500px] tracking-[-0.700px]">27°C</span>
      <div className="flex w-[60px] justify-center">
        <svg viewBox="0 0 18 10" className="h-2.5 w-[18px]" fill="none" stroke="#fff" strokeWidth="1.500"><path d="M.6 9.400 9 1l8.400 8.400" /></svg>
      </div>
      <div className="flex w-[35px] justify-center">
        <svg viewBox="0 0 16 24" className="h-6 w-4" fill="none" stroke="#fff" strokeWidth="1.400">
          <rect x="2.600" y="0" width="10.800" height="19" rx="1.600" fill="#fff" stroke="none" />
          <path d="M.8 12v6q0 3 3 3h8.400q3 0 3-3v-6M8 21v3M4.400 23.400h7.200" />
        </svg>
      </div>
      <div className="flex w-[62px] justify-center">
        <svg viewBox="0 0 24 24" className="size-6">
          <path d="M12 .6Q16 4 23 4q1 14-11 19.600Q0 18 1 4 8 4 12 .6z" fill="#fff" stroke="#000" strokeWidth="1" />
          <path d="M12 .6v23M.8 11.600h22.400" stroke="#000" strokeWidth="1.400" />
          <circle cx="17.200" cy="17.400" r="6.600" fill="#12924a" />
          <path d="M14 17.600l2.400 2.400 4.200-4.600" fill="none" stroke="#fff" strokeWidth="1.400" />
        </svg>
      </div>
      <div className="flex w-[34px] justify-center">
        <svg viewBox="0 0 24 18" className="h-[18px] w-6" fill="none" stroke="#fff" strokeWidth="1.300">
          <rect x="6" y="5" width="16" height="11" />
          <rect x="8" y="7" width="12" height="7" fill="#fff" stroke="none" />
          <path d="M23.200 8.400v4M1.700 0v3.600M5.300 0v3.600M.6 3.600h5.800v3.200q0 1.600-1.600 1.600H2.200Q.6 8.400.6 6.800zM3.500 8.400V16H6" />
        </svg>
      </div>
      <div className="flex w-16 justify-center pt-[3px]">
        <svg viewBox="0 0 20 20" className="size-5" fill="none" stroke="#fff" strokeWidth="1.400">
          <path d="M1 19Q2 2 19 1" opacity=".6" />
          <path d="M5.600 19Q6 6 19 5.600" />
          <path d="M10 19q.4-8 9-8.800" />
          <circle cx="16.800" cy="16.600" r="1.800" fill="#fff" stroke="none" />
        </svg>
      </div>
      <div className="flex w-[85px] flex-col items-center text-[18px] leading-7 tracking-[-0.300px] whitespace-nowrap">
        <span>9:51 PM</span>
        <span>3/23/2023</span>
      </div>
      <svg viewBox="0 0 38 36" className="ml-7 h-9 w-[38px] translate-y-[5px]">
        <path d="M0 1h24v17.600H15L9.600 24v-5.400H0z" fill="#fff" />
        <path d="M5 6.200h14M5 10.200h14M5 14.200h9" stroke="#1b2942" strokeWidth="1.200" />
        <circle cx="24" cy="23.600" r="12" fill="#2b2f36" stroke="#8b9097" strokeWidth="1" />
        <text x="24" y="29.200" textAnchor="middle" fontFamily="Open Sans, sans-serif" fontWeight="700" fontSize="16" fill="#fff">9</text>
      </svg>
      <div className="mr-1.5 ml-auto h-[60px] w-0.5 bg-[#6a7489]" />
    </div>
  );
}

export default function App() {
  return (
    <div className="flex h-[1080px] w-[1920px] flex-col overflow-hidden bg-[#f7f7f7] font-['Open_Sans',sans-serif]">
      <TabStrip />
      <Toolbar />
      <div className="flex min-h-0 flex-1">
        <div className="flex w-[1836px] border-t-2 border-r border-[#bababa]">
          <Page />
          <Scrollbar />
        </div>
        <Sidebar />
      </div>
      <Taskbar />
    </div>
  );
}
